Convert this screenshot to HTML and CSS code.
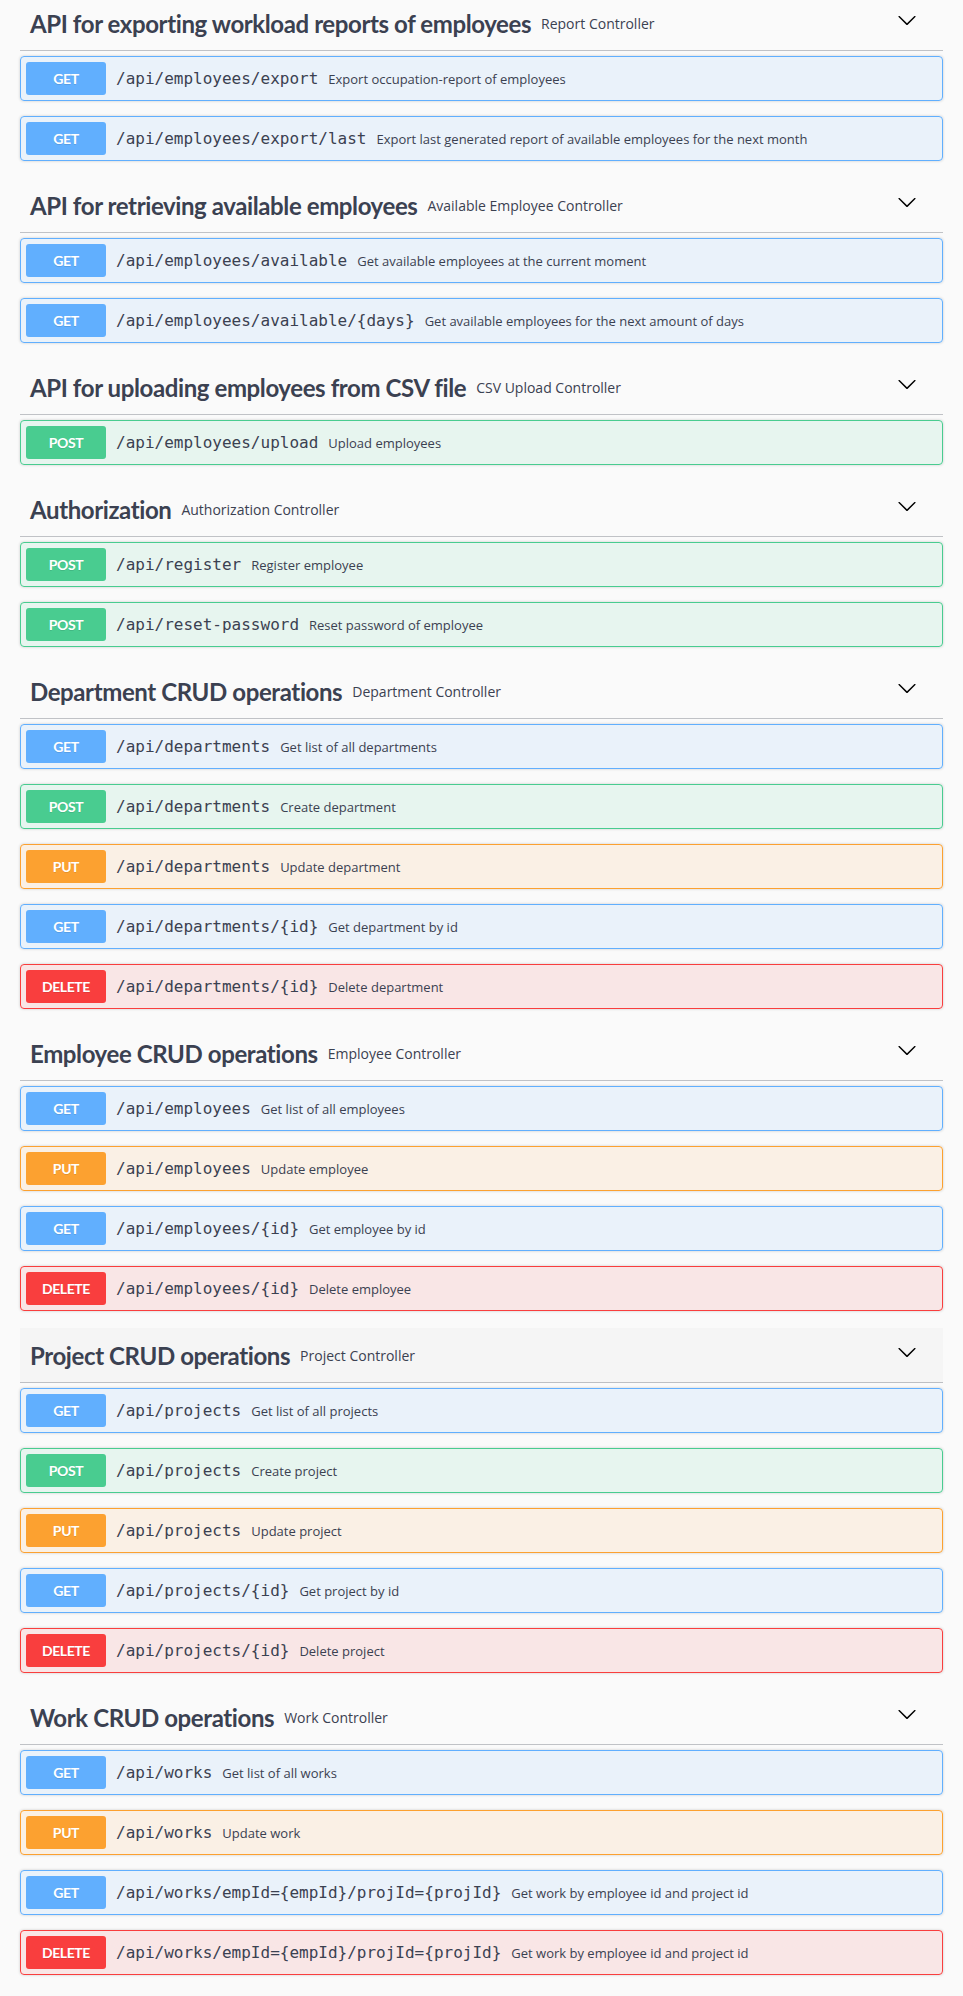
FILE: index.html
```html
<!DOCTYPE html>
<html lang="en">
<head>
<meta charset="utf-8">
<title>Swagger UI</title>
<link rel="stylesheet" href="styles.css">
</head>
<body>
<svg class="defs" width="0" height="0" aria-hidden="true">
  <symbol id="arrow-down" viewBox="0 0 20 20">
    <path d="M17.418 6.109c.272-.268.709-.268.979 0s.271.701 0 .969l-7.908 7.83c-.27.268-.707.268-.979 0l-7.908-7.83c-.27-.268-.27-.701 0-.969.271-.268.709-.268.979 0L10 13.25l7.418-7.141z"/>
  </symbol>
</svg>
<div class="wrapper">

  <section class="tag-section">
    <h3 class="tag"><span class="tag-name">API for exporting workload reports of employees</span><small>Report Controller</small><button class="expand"><svg width="20" height="20"><use href="#arrow-down"/></svg></button></h3>
    <div class="op op-get"><div class="summary"><span class="method">GET</span><span class="path">/api/employees/export</span><span class="desc">Export occupation-report of employees</span></div></div>
    <div class="op op-get"><div class="summary"><span class="method">GET</span><span class="path">/api/employees/export/last</span><span class="desc">Export last generated report of available employees for the next month</span></div></div>
  </section>

  <section class="tag-section">
    <h3 class="tag"><span class="tag-name">API for retrieving available employees</span><small>Available Employee Controller</small><button class="expand"><svg width="20" height="20"><use href="#arrow-down"/></svg></button></h3>
    <div class="op op-get"><div class="summary"><span class="method">GET</span><span class="path">/api/employees/available</span><span class="desc">Get available employees at the current moment</span></div></div>
    <div class="op op-get"><div class="summary"><span class="method">GET</span><span class="path">/api/employees/available/{days}</span><span class="desc">Get available employees for the next amount of days</span></div></div>
  </section>

  <section class="tag-section">
    <h3 class="tag"><span class="tag-name">API for uploading employees from CSV file</span><small>CSV Upload Controller</small><button class="expand"><svg width="20" height="20"><use href="#arrow-down"/></svg></button></h3>
    <div class="op op-post"><div class="summary"><span class="method">POST</span><span class="path">/api/employees/upload</span><span class="desc">Upload employees</span></div></div>
  </section>

  <section class="tag-section">
    <h3 class="tag"><span class="tag-name">Authorization</span><small>Authorization Controller</small><button class="expand"><svg width="20" height="20"><use href="#arrow-down"/></svg></button></h3>
    <div class="op op-post"><div class="summary"><span class="method">POST</span><span class="path">/api/register</span><span class="desc">Register employee</span></div></div>
    <div class="op op-post"><div class="summary"><span class="method">POST</span><span class="path">/api/reset-password</span><span class="desc">Reset password of employee</span></div></div>
  </section>

  <section class="tag-section">
    <h3 class="tag"><span class="tag-name">Department CRUD operations</span><small>Department Controller</small><button class="expand"><svg width="20" height="20"><use href="#arrow-down"/></svg></button></h3>
    <div class="op op-get"><div class="summary"><span class="method">GET</span><span class="path">/api/departments</span><span class="desc">Get list of all departments</span></div></div>
    <div class="op op-post"><div class="summary"><span class="method">POST</span><span class="path">/api/departments</span><span class="desc">Create department</span></div></div>
    <div class="op op-put"><div class="summary"><span class="method">PUT</span><span class="path">/api/departments</span><span class="desc">Update department</span></div></div>
    <div class="op op-get"><div class="summary"><span class="method">GET</span><span class="path">/api/departments/{id}</span><span class="desc">Get department by id</span></div></div>
    <div class="op op-delete"><div class="summary"><span class="method">DELETE</span><span class="path">/api/departments/{id}</span><span class="desc">Delete department</span></div></div>
  </section>

  <section class="tag-section">
    <h3 class="tag"><span class="tag-name">Employee CRUD operations</span><small>Employee Controller</small><button class="expand"><svg width="20" height="20"><use href="#arrow-down"/></svg></button></h3>
    <div class="op op-get"><div class="summary"><span class="method">GET</span><span class="path">/api/employees</span><span class="desc">Get list of all employees</span></div></div>
    <div class="op op-put"><div class="summary"><span class="method">PUT</span><span class="path">/api/employees</span><span class="desc">Update employee</span></div></div>
    <div class="op op-get"><div class="summary"><span class="method">GET</span><span class="path">/api/employees/{id}</span><span class="desc">Get employee by id</span></div></div>
    <div class="op op-delete"><div class="summary"><span class="method">DELETE</span><span class="path">/api/employees/{id}</span><span class="desc">Delete employee</span></div></div>
  </section>

  <section class="tag-section">
    <h3 class="tag tag-hover"><span class="tag-name">Project CRUD operations</span><small>Project Controller</small><button class="expand"><svg width="20" height="20"><use href="#arrow-down"/></svg></button></h3>
    <div class="op op-get"><div class="summary"><span class="method">GET</span><span class="path">/api/projects</span><span class="desc">Get list of all projects</span></div></div>
    <div class="op op-post"><div class="summary"><span class="method">POST</span><span class="path">/api/projects</span><span class="desc">Create project</span></div></div>
    <div class="op op-put"><div class="summary"><span class="method">PUT</span><span class="path">/api/projects</span><span class="desc">Update project</span></div></div>
    <div class="op op-get"><div class="summary"><span class="method">GET</span><span class="path">/api/projects/{id}</span><span class="desc">Get project by id</span></div></div>
    <div class="op op-delete"><div class="summary"><span class="method">DELETE</span><span class="path">/api/projects/{id}</span><span class="desc">Delete project</span></div></div>
  </section>

  <section class="tag-section">
    <h3 class="tag"><span class="tag-name">Work CRUD operations</span><small>Work Controller</small><button class="expand"><svg width="20" height="20"><use href="#arrow-down"/></svg></button></h3>
    <div class="op op-get"><div class="summary"><span class="method">GET</span><span class="path">/api/works</span><span class="desc">Get list of all works</span></div></div>
    <div class="op op-put"><div class="summary"><span class="method">PUT</span><span class="path">/api/works</span><span class="desc">Update work</span></div></div>
    <div class="op op-get"><div class="summary"><span class="method">GET</span><span class="path">/api/works/empId={empId}/projId={projId}</span><span class="desc">Get work by employee id and project id</span></div></div>
    <div class="op op-delete"><div class="summary"><span class="method">DELETE</span><span class="path">/api/works/empId={empId}/projId={projId}</span><span class="desc">Get work by employee id and project id</span></div></div>
  </section>

</div>
</body>
</html>
```

FILE: styles.css
```css
html, body {
  margin: 0;
  padding: 0;
  background: #fafafa;
  color: #3b4151;
  font-family: "Open Sans", "Noto Sans", sans-serif;
}

.defs {
  position: absolute;
  width: 0;
  height: 0;
  overflow: hidden;
}

.wrapper {
  padding: 0 20px;
  margin-top: -6px;
  display: flex;
  flex-direction: column;
}

.tag-section {
  display: flex;
  flex-direction: column;
  margin-top: 2px;
}

.tag {
  display: flex;
  align-items: center;
  height: 34px;
  padding: 10px 20px 10px 10px;
  margin: 0 0 5px;
  border-bottom: 1px solid rgba(59, 65, 81, 0.3);
  color: #3b4151;
  font-family: "Lato", sans-serif;
  font-size: 24px;
  font-weight: 700;
  letter-spacing: -0.4px;
}

.tag-hover {
  background: rgba(0, 0, 0, 0.02);
}

.tag-name {
  white-space: nowrap;
}

.tag small {
  flex: 1;
  padding: 0 10px;
  font-family: "Open Sans", sans-serif;
  font-size: 14px;
  font-weight: 400;
  letter-spacing: 0;
  color: #3b4151;
}

.expand {
  border: none;
  background: none;
  padding: 0 6px 6px;
  margin: 0;
  display: flex;
  align-items: center;
  cursor: pointer;
}

.expand svg {
  display: block;
  fill: #000;
}

.op {
  margin: 0 0 15px;
  border: 1px solid #000;
  border-radius: 4px;
  box-shadow: 0 0 3px rgba(0, 0, 0, 0.19);
}

.summary {
  display: flex;
  align-items: center;
  padding: 5px;
}

.method {
  min-width: 80px;
  box-sizing: border-box;
  height: 33px;
  display: flex;
  align-items: center;
  justify-content: center;
  border-radius: 3px;
  color: #fff;
  font-family: "Lato", sans-serif;
  font-size: 14px;
  font-weight: 700;
  letter-spacing: -0.4px;
  text-shadow: 0 1px 0 rgba(0, 0, 0, 0.1);
}

.path {
  padding: 0 10px;
  font-family: "DejaVu Sans Mono", monospace;
  font-size: 16px;
  color: #3b4151;
  white-space: nowrap;
}

.desc {
  flex: 1 1 auto;
  font-family: "Open Sans", sans-serif;
  font-size: 13px;
  color: #3b4151;
}

.op-get { background: rgba(97, 175, 254, 0.1); border-color: #61affe; }
.op-get .method { background: #61affe; }

.op-post { background: rgba(73, 204, 144, 0.1); border-color: #49cc90; }
.op-post .method { background: #49cc90; }

.op-put { background: rgba(252, 161, 48, 0.1); border-color: #fca130; }
.op-put .method { background: #fca130; }

.op-delete { background: rgba(249, 62, 62, 0.1); border-color: #f93e3e; }
.op-delete .method { background: #f93e3e; }
```
